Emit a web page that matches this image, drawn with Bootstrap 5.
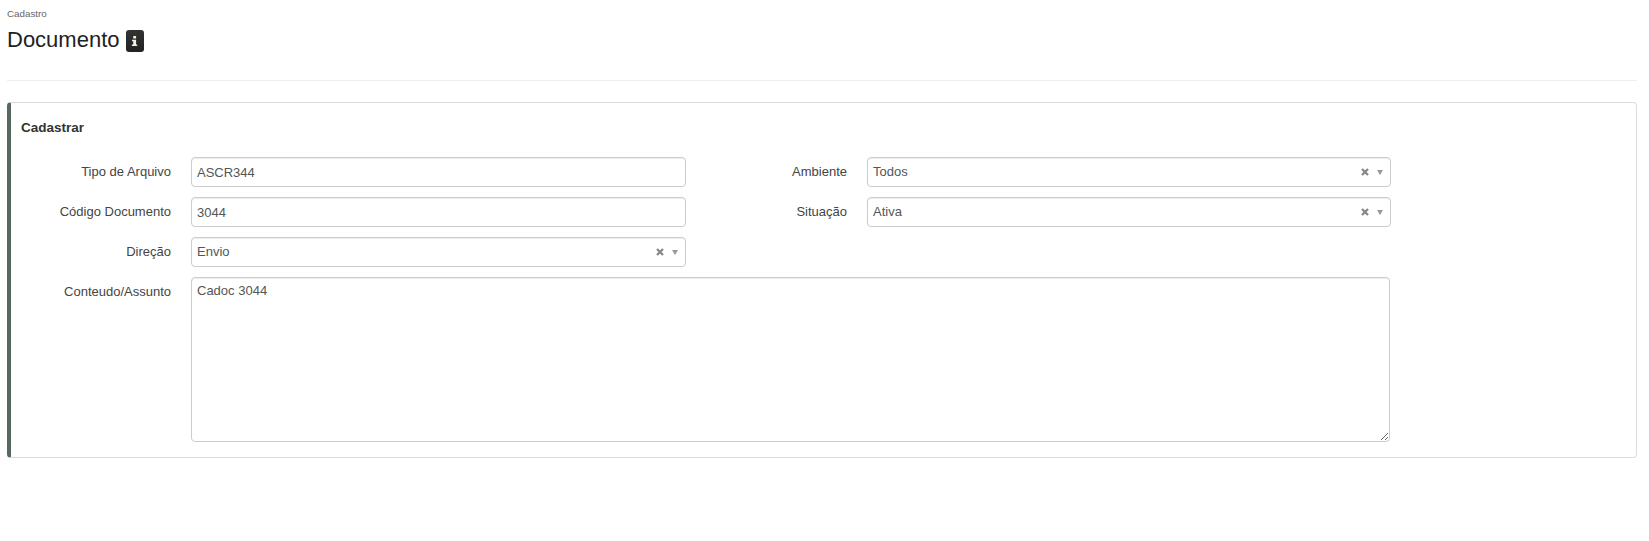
<!doctype html>
<html lang="pt">
<head>
<meta charset="utf-8">
<title>Documento</title>
<link href="https://cdn.jsdelivr.net/npm/bootstrap@5.3.0/dist/css/bootstrap.min.css" rel="stylesheet">
<style>
body{font-family:"Liberation Sans",Arial,sans-serif;font-size:13px;color:#333;background:#fff;}
.page-wrap{padding:7px 12px 0 7px;}
.crumb{font-size:9.8px;line-height:13px;color:#666;}
.doc-title{font-size:22px;line-height:30px;font-weight:400;color:#222;margin:5px 0 0;}
.info-badge{width:18px;height:22px;background:linear-gradient(#333,#222);border-radius:3px;margin-left:6px;margin-top:1px;}
.head-rule{margin:25px 0 21px;border:0;border-top:1px solid #eee;opacity:1;height:0;}
.panel-box{border:1px solid #ddd;border-left:4px solid #59685f;border-radius:4px;height:356px;padding:16px 10px 15px 9px;}
.panel-title{font-size:13.5px;line-height:17px;font-weight:700;color:#333;margin:0 0 21px 1px;}
.form-line{display:flex;height:30px;margin-bottom:10px;}
.form-line-tall{height:166px;margin-bottom:0;}
.lbl{line-height:30px;color:#444;text-align:right;margin:0;white-space:nowrap;}
.lbl-a{width:151px;margin-right:20px;}
.lbl-b{width:161px;margin-right:20px;}
.fld{font-size:13px;font-family:"Liberation Sans",Arial,sans-serif;color:#555;border:1px solid #ccc;border-radius:4px;padding:0 5px;height:30px;line-height:28px;box-shadow:inset 0 1px 1px rgba(0,0,0,.075);background:#fff;}
.fld:focus{color:#555;border-color:#ccc;box-shadow:inset 0 1px 1px rgba(0,0,0,.075);}
.fld-a{width:495px;flex:none;}
.fld-b{width:524px;flex:none;}
.fld-sel{display:flex;align-items:center;justify-content:space-between;padding-right:7px;}
.fld-text{width:1199px;height:165px;padding:4px 5px;line-height:18px;resize:both;flex:none;}
.sel-tools{display:flex;align-items:center;gap:8px;}
</style>
</head>
<body>
<div class="page-wrap">
  <div class="crumb">Cadastro</div>
  <h1 class="doc-title d-flex align-items-center">Documento
    <span class="info-badge d-inline-flex align-items-center justify-content-center">
      <svg width="7" height="10" viewBox="0 0 8 12" aria-hidden="true"><rect x="2.5" y="0" width="3.4" height="3" fill="#f4f1e6"/><path d="M1 4.4h4.9v5.8H7.2V12H.8v-1.8h1.7V6.2H1z" fill="#f4f1e6"/></svg>
    </span>
  </h1>
  <hr class="head-rule">
  <div class="panel-box">
    <h2 class="panel-title">Cadastrar</h2>
    <div class="form-line">
      <label class="lbl lbl-a">Tipo de Arquivo</label>
      <input class="form-control fld fld-a" value="ASCR344">
      <label class="lbl lbl-b">Ambiente</label>
      <div class="fld fld-b fld-sel"><span>Todos</span><span class="sel-tools"><svg width="8" height="8" viewBox="0 0 8 8"><path d="M1 1l6 6M7 1L1 7" stroke="#888" stroke-width="2.3"/></svg><svg width="6" height="5" viewBox="0 0 6 5"><path d="M0 0h6L3 5z" fill="#999"/></svg></span></div>
    </div>
    <div class="form-line">
      <label class="lbl lbl-a">Código Documento</label>
      <input class="form-control fld fld-a" value="3044">
      <label class="lbl lbl-b">Situação</label>
      <div class="fld fld-b fld-sel"><span>Ativa</span><span class="sel-tools"><svg width="8" height="8" viewBox="0 0 8 8"><path d="M1 1l6 6M7 1L1 7" stroke="#888" stroke-width="2.3"/></svg><svg width="6" height="5" viewBox="0 0 6 5"><path d="M0 0h6L3 5z" fill="#999"/></svg></span></div>
    </div>
    <div class="form-line">
      <label class="lbl lbl-a">Direção</label>
      <div class="fld fld-a fld-sel"><span>Envio</span><span class="sel-tools"><svg width="8" height="8" viewBox="0 0 8 8"><path d="M1 1l6 6M7 1L1 7" stroke="#888" stroke-width="2.3"/></svg><svg width="6" height="5" viewBox="0 0 6 5"><path d="M0 0h6L3 5z" fill="#999"/></svg></span></div>
    </div>
    <div class="form-line form-line-tall">
      <label class="lbl lbl-a">Conteudo/Assunto</label>
      <textarea class="form-control fld fld-text">Cadoc 3044</textarea>
    </div>
  </div>
</div>
<script src="https://cdn.jsdelivr.net/npm/bootstrap@5.3.0/dist/js/bootstrap.bundle.min.js"></script>
</body>
</html>
